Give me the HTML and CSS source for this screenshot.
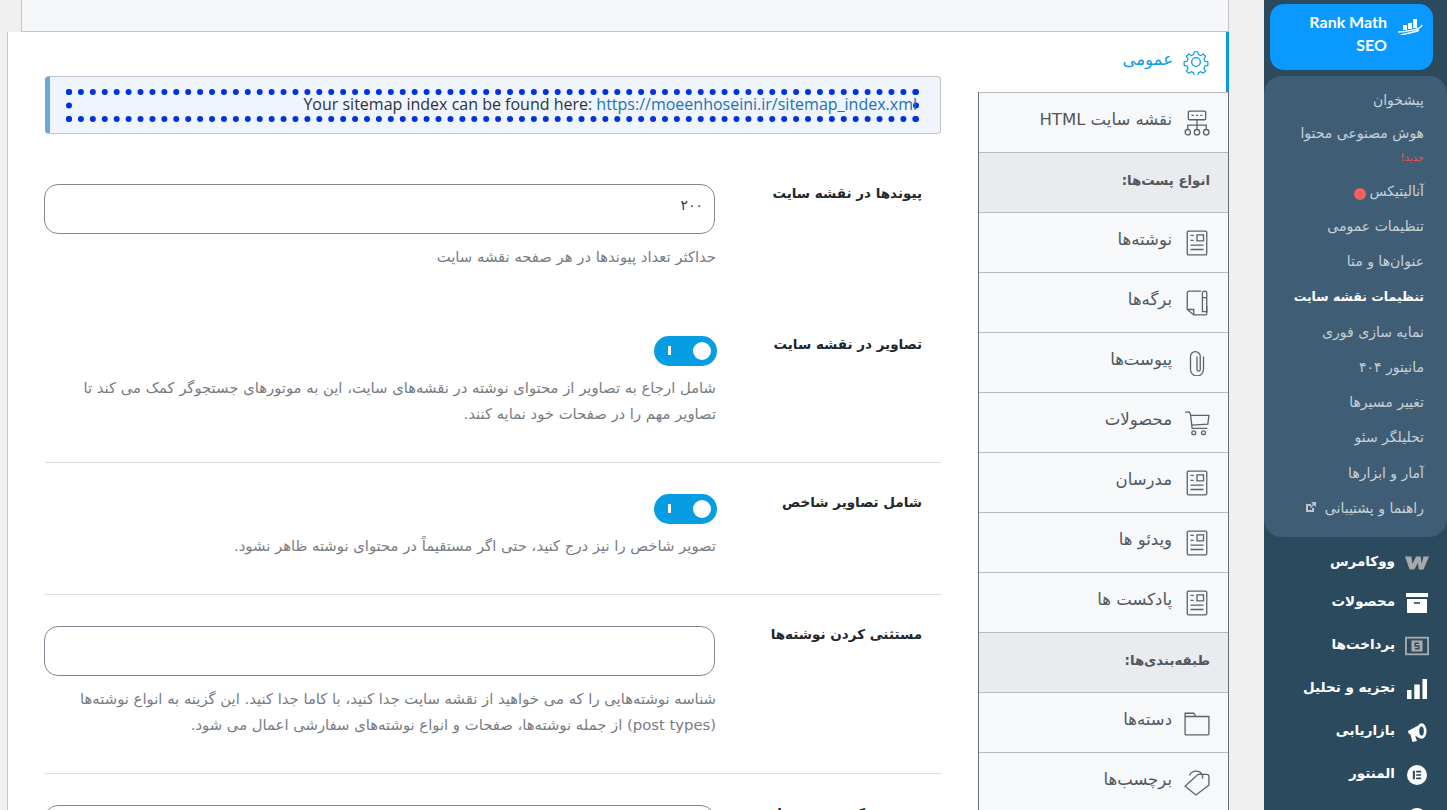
FILE: index.html
```html
<!DOCTYPE html>
<html lang="fa" dir="rtl">
<head>
<meta charset="utf-8">
<title>تنظیمات نقشه سایت</title>
<link rel="stylesheet" href="styles.css">
</head>
<body>
<div class="page">
  <aside class="sidebar">
    <a class="sb-current"><svg class="sb-logo" viewBox="0 0 26 18"><path d="M11 6h4v6h-4zM16 2h4v9h-4zM6 8h4v5H6z" fill="#fff"/><path d="M1 15c6 0 10-1 15-2s8-2 9-5M4 18c6-2 12-2 18-5" fill="none" stroke="#fff" stroke-width="1.400"/></svg><span class="sb-current-text">Rank Math SEO</span></a>
    <nav class="sb-sub">
      <a>پیشخوان</a>
      <a class="has-new">هوش مصنوعی محتوا<small>جدید!</small></a>
      <a>آنالیتیکس<i class="dot"></i></a>
      <a>تنظیمات عمومی</a>
      <a>عنوان‌ها و متا</a>
      <a class="on">تنظیمات نقشه سایت</a>
      <a>نمایه سازی فوری</a>
      <a>مانیتور ۴۰۴</a>
      <a>تغییر مسیرها</a>
      <a>تحلیلگر سئو</a>
      <a>آمار و ابزارها</a>
      <a>راهنما و پشتیبانی <svg class="ext" viewBox="0 0 12 12"><path d="M1 3h5v2H3v4h4V7h2v4H1zM6 1h5v5L9 4 6 7 5 6l3-3z" fill="#b9c6d1"/></svg></a>
    </nav>
    <nav class="sb-main">
      <a><svg viewBox="0 0 26 16"><path d="M0 1h7l1 8 4-8h5l1 8 2-8h6l-6 14h-5l-1-7-4 7H5z" fill="#a7aaad"/></svg>ووکامرس</a>
      <a><svg viewBox="0 0 24 20"><path d="M1 0h22v4H1zM2 6h20v14H2z" fill="#fff"/><path d="M9 10h6" stroke="#2c4a5e" stroke-width="1.600"/></svg>محصولات</a>
      <a><svg viewBox="0 0 26 20"><rect x="1" y="1" width="24" height="18" fill="none" stroke="#a7aaad" stroke-width="2"/><rect x="7" y="4" width="12" height="12" fill="#a7aaad"/><path d="M15 7h-4v3h4v3h-4" fill="none" stroke="#2c4a5e" stroke-width="1.500"/></svg>پرداخت‌ها</a>
      <a><svg viewBox="0 0 24 22"><path d="M1 12h5v10H1zM9 6h6v16H9zM18 0h5v22h-5z" fill="#fff"/></svg>تجزیه و تحلیل</a>
      <a><svg viewBox="0 0 22 22"><path d="M1 10l13-7v15L9 15l2 6-5 1-2-8-2-1z" fill="#fff"/><ellipse cx="16" cy="10" rx="5.500" ry="8.500" fill="#fff"/><ellipse cx="16" cy="10" rx="2.500" ry="5" fill="#2c4a5e"/></svg>بازاریابی</a>
      <a><svg viewBox="0 0 24 24"><circle cx="12" cy="12" r="12" fill="#fff"/><path d="M7 7h2.500v10H7zM11 7h6v2h-6zM11 11h6v2h-6zM11 15h6v2h-6z" fill="#2c4a5e"/></svg>المنتور</a>
      <a><svg viewBox="0 0 24 24"><circle cx="12" cy="12" r="12" fill="#fff"/></svg>قالب‌ها</a>
    </nav>
  </aside>

  <main class="main">
    <div class="topbar"></div>
    <div class="panel">
      <nav class="tabs">
        <a class="tab active"><svg viewBox="0 0 24 24"><path d="M10.200 1.500h3.600l.6 3 2.400 1 2.600-1.700 2.500 2.500-1.700 2.600 1 2.400 3 .6v3.600l-3 .6-1 2.400 1.700 2.600-2.500 2.500-2.600-1.700-2.400 1-.6 3h-3.600l-.6-3-2.400-1-2.600 1.700-2.500-2.500 1.700-2.600-1-2.400-3-.6v-3.600l3-.6 1-2.400-1.700-2.600 2.500-2.500 2.600 1.700 2.400-1z" transform="translate(1.200 1.200) scale(.9)"/><circle cx="12" cy="12" r="4"/></svg><span>عمومی</span></a>
        <a class="tab"><svg viewBox="0 0 24 24"><rect x="4" y="1" width="16" height="8" rx="1"/><path d="M7 5h2M11 5h2M15 5h2M12 9v5M3.500 18v-4h17v4M12 14v4"/><circle cx="3.500" cy="20.500" r="2.500"/><circle cx="12" cy="20.500" r="2.500"/><circle cx="20.500" cy="20.500" r="2.500"/></svg><span>نقشه سایت HTML</span></a>
        <div class="tab-head">انواع پست‌ها:</div>
        <a class="tab"><svg viewBox="0 0 24 24"><use href="#post"/></svg><span>نوشته‌ها</span></a>
        <a class="tab"><svg viewBox="0 0 24 24"><path d="M16 1H5a2 2 0 0 0-2 2v15l6 5h11a1 1 0 0 0 1-1v-7M9 23v-5H3"/><path d="M17 7V3a2 2 0 0 1 4 0v17h-4zM17 7h4"/></svg><span>برگه‌ها</span></a>
        <a class="tab"><svg viewBox="0 0 24 24"><path d="M18 6v12a6 6 0 0 1-12 0V6a4.500 4.500 0 0 1 9 0v12a1.500 1.500 0 0 1-3 0V6"/></svg><span>پیوست‌ها</span></a>
        <a class="tab"><svg viewBox="0 0 24 24"><path d="M1 2h4l1 2 1.500 13h14M6 5h17l-1 8-15 1"/><circle cx="9" cy="21" r="1.800"/><circle cx="18" cy="21" r="1.800"/></svg><span>محصولات</span></a>
        <a class="tab"><svg viewBox="0 0 24 24"><use href="#post"/></svg><span>مدرسان</span></a>
        <a class="tab"><svg viewBox="0 0 24 24"><use href="#post"/></svg><span>ویدئو ها</span></a>
        <a class="tab"><svg viewBox="0 0 24 24"><use href="#post"/></svg><span>پادکست ها</span></a>
        <div class="tab-head">طبقه‌بندی‌ها:</div>
        <a class="tab"><svg viewBox="0 0 24 24"><path d="M1 3h8l2 3h12v16a1 1 0 0 1-1 1H2a1 1 0 0 1-1-1zM11 6H1"/></svg><span>دسته‌ها</span></a>
        <a class="tab"><svg viewBox="0 0 24 24"><path d="M1 15L13 4h8a2 2 0 0 1 2 2v8L11 23zM17 8c1-3-1-7-6-7-3 0-5 2-6 4"/></svg><span>برچسب‌ها</span></a>
      </nav>

      <div class="content">
        <div class="notice">
          <ul class="notice-inner" dir="ltr"><li>Your sitemap index can be found here: <a>https://moeenhoseini.ir/sitemap_index.xml</a></li></ul>
        </div>

        <section class="row row-first">
          <label class="row-label">پیوندها در نقشه سایت</label>
          <div class="row-field">
            <div class="input">۲۰۰</div>
            <p class="desc desc-input">حداکثر تعداد پیوندها در هر صفحه نقشه سایت</p>
          </div>
        </section>

        <section class="row row-images">
          <label class="row-label">تصاویر در نقشه سایت</label>
          <div class="row-field">
            <div class="toggle"><i class="bar"></i><i class="knob"></i></div>
            <p class="desc">شامل ارجاع به تصاویر از محتوای نوشته در نقشه‌های سایت، این به موتورهای جستجوگر کمک می کند تا تصاویر مهم را در صفحات خود نمایه کنند.</p>
          </div>
        </section>

        <section class="row row-thumb">
          <label class="row-label">شامل تصاویر شاخص</label>
          <div class="row-field">
            <div class="toggle"><i class="bar"></i><i class="knob"></i></div>
            <p class="desc">تصویر شاخص را نیز درج کنید، حتی اگر مستقیماً در محتوای نوشته ظاهر نشود.</p>
          </div>
        </section>

        <section class="row row-exclude">
          <label class="row-label">مستثنی کردن نوشته‌ها</label>
          <div class="row-field">
            <div class="input"></div>
            <p class="desc desc-input2">شناسه نوشته‌هایی را که می خواهید از نقشه سایت جدا کنید، با کاما جدا کنید. این گزینه به انواع نوشته‌ها (post types) از جمله نوشته‌ها، صفحات و انواع نوشته‌های سفارشی اعمال می شود.</p>
          </div>
        </section>

        <section class="row row-last">
          <label class="row-label">مستثنی کردن دسته‌ها</label>
          <div class="row-field"><div class="input"></div></div>
        </section>
      </div>
    </div>
  </main>
</div>
<svg class="defs" aria-hidden="true"><defs><g id="post"><rect x="3" y="1" width="18" height="22" rx="1"/><rect x="12" y="4.500" width="6" height="5.500"/><path d="M6 5h3M6 9.500h3M6 14h12M6 18h12"/></g></defs></svg>
</body>
</html>
```
FILE: styles.css
```css
* { box-sizing: border-box; }
html, body { margin: 0; height: 810px; overflow: hidden; }
body { background: #f0f0f1; font-family: "DejaVu Sans", "Noto Sans", sans-serif; color: #3c434a; font-size: 14px; }
a { display: block; text-decoration: none; }
.defs { display: none; }
.page { display: flex; height: 810px; overflow: hidden; }

.sidebar { width: 183px; flex: none; height: 810px; background: #2c4a5e; overflow: hidden; padding-top: 4px; }
.sb-current { display: flex; align-items: flex-start; gap: 10px; margin: 0 14px 6px 6px; height: 66px; padding: 6px 10px 0 14px; background: #0a99ff; border-radius: 14px; color: #fff; font: 700 16px/23px "Lato", sans-serif; }
.sb-logo { width: 26px; height: 18px; flex: none; margin-top: 7px; }
.sb-current-text { width: 90px; text-align: right; direction: ltr; }
.sb-sub { background: #3f5d74; border-radius: 18px; height: 461px; padding: 12px 23px 0 6px; }
.sb-sub a { height: 35.200px; font-size: 14px; line-height: 24px; color: #c6d1d9; white-space: nowrap; }
.sb-sub a:first-child { height: 33px; }
.sb-sub a.has-new { height: 58px; }
.sb-sub a.has-new small { display: block; color: #f0525a; font-size: 10px; line-height: 26px; }
.sb-sub a.on { color: #fff; font-weight: 700; font-size: 12.500px; }
.dot { display: inline-block; width: 12px; height: 12px; background: #f25f5c; border-radius: 50%; vertical-align: -4px; margin-right: 3px; }
.ext { width: 12px; height: 12px; margin-right: 3px; }
.sb-main { padding: 2px 18px 0 0; }
.sb-main a { display: flex; align-items: center; gap: 10px; height: 43px; color: #fff; font-weight: 700; font-size: 13.500px; white-space: nowrap; }
.sb-main a:first-child { margin-bottom: -3px; }
.sb-main svg { width: 24px; height: 20px; flex: none; margin-top: 4px; }

.main { width: 1222px; flex: none; margin-right: 35px; height: 810px; }
.topbar { height: 32px; width: 1208px; background: #f6f7f8; border: 1px solid #c3c4c7; border-top: 0; }
.panel { display: flex; height: 778px; background: #fff; border-left: 1px solid #c3c4c7; }
.tabs { width: 251px; flex: none; background: #f6f8fa; border: 1px solid #666c72; border-width: 0 1px; }
.tab { display: flex; align-items: center; gap: 12px; height: 60px; padding: 0 18px 0 0; border-top: 1px solid #b5bcc2; color: #50575e; font-size: 16.500px; white-space: nowrap; }
.tab svg { width: 26px; height: 26px; flex: none; fill: none; stroke: #5b6268; stroke-width: 1.200; }
.tab span { position: relative; top: -3px; }
.tab.active { background: #fff; border-top: 0; border-right: 3px solid #069de3; color: #069de3; padding-right: 17px; gap: 10px; margin: 0 -1px; width: 251px; }
.tab.active svg { stroke: #069de3; }
.tab-head { height: 60px; line-height: 56px; padding-right: 18px; background: #e9ebee; border-top: 1px solid #b5bcc2; font-size: 13.300px; font-weight: 700; color: #50575e; }

.content { flex: 1; min-width: 0; padding: 44px 37px 0 37px; }
.notice { height: 58px; background: #f0f5fd; border: 1px solid #c3c4c7; border-left: 5px solid #6aa9e0; border-radius: 4px; padding: 12px 21px 0 16px; }
.notice-inner { margin: 0; padding: 0; list-style: none; height: 33px; border: 6px dotted #0033dd; font: 16px/21px "Open Sans", sans-serif; color: #2c3338; text-align: right; white-space: nowrap; }
.notice-inner li { margin-right: -4px; line-height: 21px; position: relative; top: -1px; }
.notice-inner a { display: inline; color: #2271b1; }

.row { display: flex; border-bottom: 1px solid #dcdcde; }
.row-label { width: 225px; flex: none; padding-right: 19px; font-size: 13.500px; font-weight: 700; color: #23282d; white-space: nowrap; line-height: 16px; }
.row-field { flex: 1; min-width: 0; }
.row-first { border: 0; margin-top: 50px; height: 128px; }
.row-first .row-label { line-height: 18px; }
.row-images { height: 151px; padding-top: 24px; }
.row-thumb { height: 132px; padding-top: 31px; }
.row-exclude { height: 179px; padding-top: 31px; }
.row-last { border: 0; padding-top: 31px; }
.input { display: flex; align-items: center; height: 50px; width: 671px; margin-right: 1px; background: #fff; border: 1px solid #7e8993; border-radius: 14px; padding: 0 11px 8px; font-size: 14px; color: #32373c; }
.desc { margin: 0; font-size: 14.800px; line-height: 26px; color: #787c82; }
.desc-input, .desc-input2 { margin-top: 10px; }
.toggle { position: relative; width: 63px; height: 30px; background: #069de3; border-radius: 15px; margin-right: -1px; margin-bottom: 9px; }
.toggle .knob { position: absolute; right: 6px; top: 6px; width: 18px; height: 18px; border-radius: 50%; background: #fff; }
.toggle .bar { position: absolute; left: 14px; top: 10px; width: 3px; height: 9px; background: #fff; }
```
